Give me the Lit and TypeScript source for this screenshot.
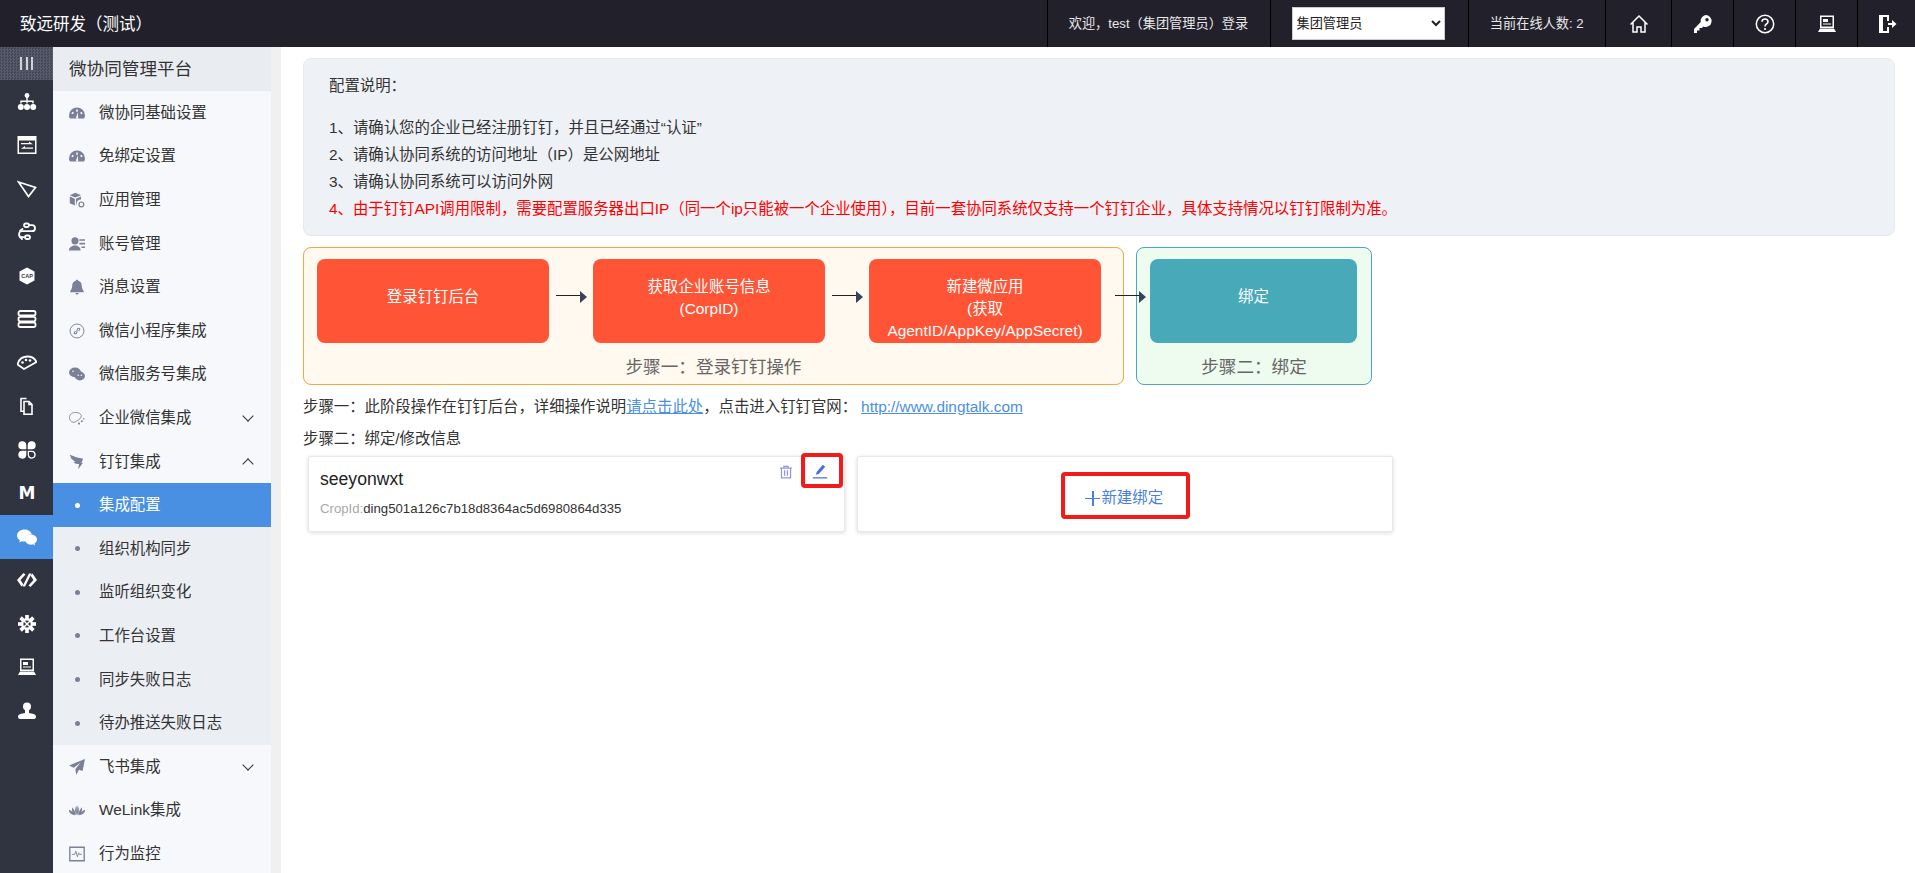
import { LitElement, html, css, svg } from 'lit';
import { customElement } from 'lit/decorators.js';
import { classMap } from 'lit/directives/class-map.js';

const teeth = [0, 45, 90, 135, 180, 225, 270, 315];

// all icons share a 20x20 box and inherit currentColor
const icons: Record<string, unknown> = {
  tree: svg`<circle cx="10" cy="3.500" r="2.400"/><path d="M9.300 5h1.400v3.600h6v3h-1.400v-1.600H10.700v1.600H9.300V10H4.700v1.600H3.300v-3h6z"/><circle cx="3.800" cy="15" r="3"/><circle cx="10" cy="15" r="3"/><circle cx="16.200" cy="15" r="3"/>`,
  panel: svg`<path fill-rule="evenodd" d="M.5 1h19v18H.5zM2 5.500v12h16v-12z"/><path d="M4 8h8V6.500l4 2.700H4zM16 12.500H8V11l-4 2.700h12z"/>`,
  send: svg`<path fill="none" stroke="currentColor" stroke-width="1.700" d="M1.500 3l17 5.500-7 9z"/>`,
  chain: svg`<g fill="none" stroke="currentColor" stroke-width="1.800" stroke-linecap="round"><rect x="7" y="1.500" width="5" height="3.500" rx="1.700"/><path d="M12 3.200h3a3 3 0 010 6H5a3 3 0 000 6h3"/><rect x="8" y="13.500" width="5" height="3.500" rx="1.700"/><path d="M3 8.800l2.500-1.800M3 15l2 2"/></g>`,
  cap: svg`<path d="M10 1.500l7.500 4v9l-7.500 4-7.500-4v-9z"/><text x="10" y="12" text-anchor="middle" class="tiny">CAP</text>`,
  stack: svg`<g fill="none" stroke="currentColor" stroke-width="1.800"><rect x="1.500" y="2" width="17" height="4.500" rx="1.800"/><rect x="1.500" y="7.800" width="17" height="4.500" rx="1.800"/><rect x="1.500" y="13.500" width="17" height="4.500" rx="1.800"/></g>`,
  fan: svg`<path fill="none" stroke="currentColor" stroke-width="1.800" stroke-linejoin="round" d="M.5 11.500C2 6 6 3.500 10.500 3.500c4 0 7.500 2.300 9 5.500L7 16z"/><circle cx="5.500" cy="9.500" r="1.300"/><circle cx="9" cy="7" r="1.300"/><circle cx="13" cy="7.500" r="1.300"/>`,
  docs: svg`<g fill="none" stroke="currentColor" stroke-width="1.600"><path d="M4 2.500v12.700h3"/><path d="M3.500 2.500h6M7 5.500h5l3 3v9.700H7z"/><path d="M12 5.500v3h3"/></g>`,
  clover: svg`<path d="M9.300 9.300H5a4 4 0 114.300-4.300zM10.700 9.300H15A4 4 0 1010.700 5zM9.300 10.700H5a4 4 0 104.300 4.300z"/><path fill-rule="evenodd" d="M10.700 10.700H15a4 4 0 11-4.300 4.300zM12 12v3a2.700 2.700 0 103-3z"/>`,
  em: svg`<text x="10" y="16" text-anchor="middle" class="big">M</text>`,
  wechat: svg`<path d="M7.500 2.500C3.400 2.500 0 5.200 0 8.600c0 2 1.100 3.600 2.900 4.800l-.7 2.100 2.500-1.300c.9.200 1.700.4 2.800.4h.7a5.500 5.500 0 01-.2-1.500c0-3.200 2.700-5.700 6.200-5.700h.6C14 4.600 11 2.500 7.500 2.500z"/><path d="M20 12.600c0-2.800-2.800-5.100-6-5.100-3.400 0-6 2.300-6 5.100s2.600 5.100 6 5.100c.7 0 1.400-.2 2.100-.4l1.900 1.100-.5-1.800c1.400-1 2.500-2.400 2.500-4z"/>`,
  code: svg`<path d="M6.500 3L0 10l4.500 6.500 2-2L3.500 10l5-5.500zM13.500 17L20 10l-4.500-6.500-2 2 3 4.500-5 5.500z"/><path d="M12 3.500h2.500L8 16.500H5.500z"/>`,
  gear: svg`${teeth.map((a) => svg`<rect x="8.200" y="1" width="3.600" height="5" transform="rotate(${a} 10 10)"/>`)}<circle cx="10" cy="10" r="6"/><circle cx="10" cy="10" r="3.600" fill="#303441"/><path d="M5.500 6.500l1-1 8 8-1 1zM13.500 5.500l1 1-8 8-1-1z"/>`,
  monitor: svg`<path fill-rule="evenodd" d="M3 1.500h14v12.500H3zM4.500 3v9.500h11V3z"/><path d="M6 5h5v3H6zM6 9.500h8v1H6zM3 14.500h14l2 3.500H1z"/>`,
  user: svg`<circle cx="10" cy="5.500" r="4"/><path d="M8 9h4v3c3 .5 7 1 7 3.500 0 2-1 2.500-3 2.500H4c-2 0-3-.5-3-2.500C1 13 5 12.500 8 12z"/>`,
  gauge: svg`<path fill-rule="evenodd" d="M10 3a10 10 0 0110 10c0 1.800-.5 3-1.500 4h-17C.5 16 0 14.800 0 13A10 10 0 0110 3zM9 5.500v3h2v-3zM4 8.500L3 10.500l2 1 1-2zM16 8.500l-2 1 1 2 2-1zM8.500 16.500h3L11 9z"/>`,
  box: svg`<path d="M8 1l7 3-7 3-7-3zM1 5.500l6.300 2.800V17L1 14zM15 5.500v4a5 5 0 00-5.500 5.500L8.700 17V8.300z"/><circle cx="15.500" cy="15.500" r="3" fill="none" stroke="currentColor" stroke-width="1.500"/>`,
  account: svg`<circle cx="7.500" cy="6" r="4.500"/><path d="M0 18c0-4 4-5 5.500-6h4c1.500 1 5 2 5 6zM13 4h7v2h-7zM13 8.500h7v2h-7zM15.500 13H20v2h-4.500z"/>`,
  bell: svg`<path d="M10 1c.8 0 1.500.5 1.500 1.300 3 .8 4.500 3.200 4.500 6.200 0 3 1 5 2.500 6.500v1.500h-17V15C3 13.500 4 11.500 4 8.500c0-3 1.500-5.400 4.500-6.200C8.500 1.500 9.200 1 10 1zM8 17.500h4a2 2 0 01-4 0z"/>`,
  mini: svg`<circle cx="10" cy="10" r="8.700" fill="none" stroke="currentColor" stroke-width="1.200"/><path fill="none" stroke="currentColor" stroke-width="1.300" d="M6.500 12.500c0 1.500 2.800 1.500 3.200-.5l.6-4c.4-2 3.200-2 3.200-.3 0 1.200-1 1.600-1.800 1.600M8.500 10.500c-1 0-2 .5-2 2"/>`,
  wx: svg`<ellipse cx="7.500" cy="8" rx="7.500" ry="6"/><ellipse cx="13.500" cy="12.500" rx="6.500" ry="5.500"/><circle cx="11.500" cy="11.500" r="1" fill="#f6f8fb"/><circle cx="15.500" cy="11.500" r="1" fill="#f6f8fb"/><circle cx="5" cy="6.500" r="1" fill="#f6f8fb"/>`,
  bubbles: svg`<path fill="none" stroke="currentColor" stroke-width="1.100" d="M3 14.500C1 13 .5 11 .5 9.500.5 5.500 4 3 8.500 3c3.500 0 6 1.500 7 4-.5 3-3 6-6.500 7-1 .5-1.500 1.500-3 1.500z"/><circle cx="16" cy="14" r="1.300"/><circle cx="12.500" cy="17" r="1.300"/><circle cx="18.500" cy="11" r="1"/>`,
  ding: svg`<path d="M1 1c5.500 2.500 11 4 16.500 4.500-.5 2.500-1 4-2.500 5.500h2.500L11.500 19l1-6.500H10c-1-.5-1.500 0-2-.5L5.500 10H8L3 6z"/>`,
  plane: svg`<path d="M20 0L0 8l6 3 8.500-6.500-6.500 8 1 7.500 3.500-6.500 4.500 1.500z"/>`,
  petals: svg`<g transform="translate(10 16.500)"><path d="M-.5 0C-3-3-3-8-.8-12-.2-8 .2-3-.5 0zM.5 0C3-3 3-8 .8-12 .2-8-.2-3 .5 0z"/><path d="M-1.500 0C-5-1-7-5-6-10-3.500-7-1.500-3-1.500 0z"/><path d="M1.500 0C5-1 7-5 6-10 3.500-7 1.500-3 1.500 0z"/><path d="M-2.500 0C-7-.5-10-3-10.500-7-6.500-6-3.500-3-2.500 0z"/><path d="M2.500 0C7-.5 10-3 10.500-7 6.500-6 3.500-3 2.500 0z"/></g>`,
  pulse: svg`<path fill="none" stroke="currentColor" stroke-width="1.700" d="M1 1.500h18v17H1z"/><path fill="none" stroke="currentColor" stroke-width="1.100" d="M3.500 10.500h3.500l1.500-4 2 7 1.500-5 1 2h3"/>`,
  home: svg`<path fill="none" stroke="currentColor" stroke-width="1.500" d="M1.500 10.500L10 2l8.500 8.500M4 8.500V18h4v-5h4v5h4V8.500"/>`,
  key: svg`<path fill-rule="evenodd" d="M12.500 1a6 6 0 11-2.300 11.500L9 14H6.500v2.500H4V19H1v-4l6.800-7a6 6 0 014.700-7zm1.500 3a1.700 1.700 0 100 3.400A1.700 1.700 0 0014 4z"/>`,
  help: svg`<circle cx="10" cy="10" r="8.700" fill="none" stroke="currentColor" stroke-width="1.500"/><path fill="none" stroke="currentColor" stroke-width="1.600" d="M7 7.800C7 6 8.300 5 10 5s3 1 3 2.700c0 2.300-3 2.300-3 4.800"/><circle cx="10" cy="15" r="1.100"/>`,
  exit: svg`<path d="M2 1h10v6h-2V3H6v14h4v-4h2v6H2z"/><path d="M11 9h4V6l4.500 4-4.500 4v-3h-4z"/>`,
  trash: svg`<path fill="none" stroke="currentColor" stroke-width="1.700" d="M1.500 4.500h17M7 4.500V2h6v2.500M3.500 4.500V18.500h13V4.500M8 7.500v8M12 7.500v8"/>`,
  pen: svg`<path d="M13.500 1l3 2.500-8 9-3.500 1 .8-3.500zM1 16.500h18V18H1z"/>`,
};

const icon = (name: string) => html`<svg class="icon" viewBox="0 0 20 20" fill="currentColor">${icons[name]}</svg>`;

const railItems = ['tree', 'panel', 'send', 'chain', 'cap', 'stack', 'fan', 'docs', 'clover', 'em', 'wechat', 'code', 'gear', 'monitor', 'user'];

type MenuItem = { label: string; icon?: string; caret?: 'up' | 'down'; sub?: boolean; active?: boolean };

const menuItems: MenuItem[] = [
  { label: '微协同基础设置', icon: 'gauge' },
  { label: '免绑定设置', icon: 'gauge' },
  { label: '应用管理', icon: 'box' },
  { label: '账号管理', icon: 'account' },
  { label: '消息设置', icon: 'bell' },
  { label: '微信小程序集成', icon: 'mini' },
  { label: '微信服务号集成', icon: 'wx' },
  { label: '企业微信集成', icon: 'bubbles', caret: 'down' },
  { label: '钉钉集成', icon: 'ding', caret: 'up' },
  { label: '集成配置', sub: true, active: true },
  { label: '组织机构同步', sub: true },
  { label: '监听组织变化', sub: true },
  { label: '工作台设置', sub: true },
  { label: '同步失败日志', sub: true },
  { label: '待办推送失败日志', sub: true },
  { label: '飞书集成', icon: 'plane', caret: 'down' },
  { label: 'WeLink集成', icon: 'petals' },
  { label: '行为监控', icon: 'pulse' },
];

@customElement('app-root')
export class AppRoot extends LitElement {
  static styles = css`
    :host {
      display: block;
      height: 873px;
      overflow: hidden;
      background: #fff;
      color: #333;
      font: 15.4px/22px 'Liberation Sans', 'Noto Sans CJK SC', sans-serif;
    }
    .icon {
      display: block;
      width: 100%;
      height: 100%;
    }
    .tiny {
      fill: #303441;
      font: 700 5.500px 'Liberation Sans', sans-serif;
    }
    .big {
      font: 700 17px 'DejaVu Sans', sans-serif;
    }

    /* top bar */
    .top {
      display: flex;
      align-items: center;
      height: 47px;
      background: #22212b;
      color: #e8e8ea;
      font-size: 13.2px;
    }
    .brand {
      flex: 1;
      padding-left: 20px;
      color: #fff;
      font-size: 16.500px;
    }
    .cell {
      display: flex;
      align-items: center;
      justify-content: center;
      height: 47px;
      box-sizing: border-box;
      border-left: 1px solid #000;
    }
    .welcome { width: 223px; }
    .pick { width: 198px; padding-right: 2px; }
    .online { width: 137.5px; }
    .tool { width: 62px; color: #fff; }
    .tool.first { width: 66px; }
    .tool.last { width: 58px; }
    .tool span {
      width: 20px;
      height: 20px;
    }
    select {
      width: 153px;
      height: 33px;
      padding: 0;
      border: 1px solid #ccc;
      border-radius: 0;
      background: #fff;
      color: #222;
      font: 13.2px 'Liberation Sans', 'Noto Sans CJK SC', sans-serif;
    }

    .body {
      display: flex;
      height: 826px;
    }

    /* icon rail */
    .rail {
      flex: none;
      width: 53px;
      background: #303441;
      color: #fff;
    }
    .rail-toggle {
      display: flex;
      justify-content: center;
      gap: 3.5px;
      height: 33px;
      padding-top: 10px;
      box-sizing: border-box;
      background: repeating-conic-gradient(#585c6a 0 25%, #43475a 0 50%) 0 0 / 3px 3px;
    }
    .rail-toggle i {
      width: 2px;
      height: 13px;
      background: #d0d2d8;
    }
    .rail-item {
      display: flex;
      align-items: center;
      justify-content: center;
      height: 43.5px;
    }
    .rail-item.on { background: #4a90e2; }
    .rail-item span {
      width: 20px;
      height: 20px;
    }

    /* side menu */
    .menu {
      flex: none;
      width: 218px;
      background: #f6f8fb;
    }
    .menu-title {
      height: 44px;
      padding-left: 16px;
      background: #e9ecf1;
      font-size: 17.6px;
      line-height: 44px;
    }
    .row {
      display: flex;
      align-items: center;
      height: 43.6px;
      padding: 0 17px 0 16px;
    }
    .row.sub { background: #ebeef3; }
    .row.on {
      background: #4a90e2;
      color: #fff;
    }
    .row-icon {
      flex: none;
      width: 16px;
      height: 16px;
      margin-right: 14px;
      color: #7b8098;
    }
    .dot {
      flex: none;
      width: 5px;
      height: 5px;
      margin: 0 19px 0 6px;
      border-radius: 50%;
      background: #7b8098;
    }
    .row.on .dot { background: #fff; }
    .label { flex: 1; }
    .caret {
      width: 7px;
      height: 7px;
      margin-right: 2px;
      border: solid #333;
      border-width: 0 1.5px 1.5px 0;
    }
    .caret.down { transform: translateY(-2px) rotate(45deg); }
    .caret.up { transform: translateY(2px) rotate(-135deg); }
    .gutter {
      flex: none;
      width: 10px;
      background: #f0f0f0;
    }

    /* main */
    .main {
      flex: 1;
      min-width: 0;
      padding: 11px 20px 0 22px;
    }
    .notice {
      height: 178px;
      box-sizing: border-box;
      padding: 13px 25px 0;
      border: 1px solid #e6e9ee;
      border-radius: 8px;
      background: #eef1f5;
      line-height: 27px;
    }
    .notice-title { margin-bottom: 15px; }
    .alert { color: #f00; }

    .flow {
      position: relative;
      display: flex;
      gap: 12px;
      height: 138px;
      margin-top: 11px;
    }
    .phase {
      box-sizing: border-box;
      height: 138px;
      padding: 11px 0 0;
      border: 1px solid;
      border-radius: 8px;
      text-align: center;
    }
    .phase.one {
      width: 821px;
      padding-left: 13px;
      border-color: #f5a93b;
      background: #fff9ef;
    }
    .phase.two {
      width: 236px;
      padding-left: 13px;
      border-color: #4ba6bf;
      background: #eefcf0;
    }
    .boxes {
      display: flex;
    }
    .block {
      flex: none;
      width: 232px;
      height: 84px;
      box-sizing: border-box;
      padding-top: 17px;
      border-radius: 8px;
      background: #ff5436;
      color: #fff;
    }
    .block.single { padding-top: 27px; }
    .block.teal {
      width: 207px;
      background: #48aab8;
    }
    .arrow {
      flex: none;
      width: 31px;
      height: 14px;
      margin: 31px 6px 0 7px;
      color: #3a4256;
    }
    .arrow.over {
      position: absolute;
      left: 812px;
      top: 43px;
      margin: 0;
    }
    .arrow svg { display: block; }
    .caption {
      margin: 13px 0 0 -13px;
      color: #666;
      font-size: 17.6px;
      line-height: 22px;
    }

    .note { margin-top: 11px; }
    .note + .note { margin-top: 10px; }
    .note a {
      color: #4a90e2;
      text-decoration: underline;
    }
    .note a.site { margin-left: 4px; }

    .cards {
      display: flex;
      gap: 12px;
      margin: 6px 0 0 5px;
    }
    .card {
      position: relative;
      box-sizing: border-box;
      width: 536.500px;
      height: 76px;
      border: 1px solid #e8e8e8;
      border-radius: 2px;
      background: #fff;
      box-shadow: 0 1px 4px rgba(0, 0, 0, 0.14);
    }
    .card-name {
      padding: 11px 0 0 11px;
      color: #222;
      font-size: 17.6px;
    }
    .card-id {
      padding: 9px 0 0 11px;
      font-size: 13.2px;
      line-height: 20px;
    }
    .card-id b {
      color: #a8a8a8;
      font-weight: 400;
    }
    .action {
      position: absolute;
    }
    .action.trash {
      left: 470px;
      top: 8px;
      width: 14px;
      height: 14px;
      color: #8f93ee;
    }
    .action.pen {
      left: 503px;
      top: 7px;
      width: 16px;
      height: 16px;
      color: #4a6ee0;
    }
    .mark {
      position: absolute;
      box-sizing: border-box;
      border: 4px solid #f01c1c;
      border-radius: 4px;
    }
    .mark.edit {
      left: 492px;
      top: -4px;
      width: 42px;
      height: 35px;
    }
    .mark.create {
      left: 203px;
      top: 15px;
      width: 129px;
      height: 47px;
    }
    .add {
      display: flex;
      align-items: center;
      justify-content: center;
      height: 74px;
      padding: 8px 1px 0 0;
      box-sizing: border-box;
      color: #4a7fe0;
    }
    .plus {
      position: relative;
      width: 15px;
      height: 15px;
      margin-right: 1px;
    }
    .plus::before,
    .plus::after {
      content: '';
      position: absolute;
      background: currentColor;
    }
    .plus::before { left: 0; right: 0; top: 7px; height: 1.500px; }
    .plus::after { top: 0; bottom: 0; left: 7px; width: 1.500px; }
  `;

  private arrow(over = false) {
    return html`<div class=${classMap({ arrow: true, over })}>
      <svg width="31" height="14" viewBox="0 0 31 14">
        <path d="M0 5.500h24" stroke="#222" stroke-width="1"/>
        <path d="M24 1l7 6-7 6z" fill="currentColor"/>
      </svg>
    </div>`;
  }

  protected render() {
    return html`
      <header class="top">
        <div class="brand">致远研发（测试）</div>
        <div class="cell welcome">欢迎，test（集团管理员）登录</div>
        <div class="cell pick">
          <select><option>集团管理员</option></select>
        </div>
        <div class="cell online">当前在线人数: 2</div>
        <div class="cell tool first"><span>${icon('home')}</span></div>
        <div class="cell tool"><span>${icon('key')}</span></div>
        <div class="cell tool"><span>${icon('help')}</span></div>
        <div class="cell tool"><span>${icon('monitor')}</span></div>
        <div class="cell tool last"><span>${icon('exit')}</span></div>
      </header>
      <div class="body">
        <nav class="rail">
          <div class="rail-toggle"><i></i><i></i><i></i></div>
          ${railItems.map(
            (name) => html`<div class=${classMap({ 'rail-item': true, on: name === 'wechat' })}>
              <span>${icon(name)}</span>
            </div>`,
          )}
        </nav>
        <aside class="menu">
          <div class="menu-title">微协同管理平台</div>
          ${menuItems.map(
            (item) => html`<div class=${classMap({ row: true, sub: !!item.sub, on: !!item.active })}>
              ${item.icon ? html`<span class="row-icon">${icon(item.icon)}</span>` : html`<span class="dot"></span>`}
              <span class="label">${item.label}</span>
              ${item.caret ? html`<span class="caret ${item.caret}"></span>` : ''}
            </div>`,
          )}
        </aside>
        <div class="gutter"></div>
        <main class="main">
          <section class="notice">
            <div class="notice-title">配置说明：</div>
            <div>1、请确认您的企业已经注册钉钉，并且已经通过“认证”</div>
            <div>2、请确认协同系统的访问地址（IP）是公网地址</div>
            <div>3、请确认协同系统可以访问外网</div>
            <div class="alert">4、由于钉钉API调用限制，需要配置服务器出口IP（同一个ip只能被一个企业使用），目前一套协同系统仅支持一个钉钉企业，具体支持情况以钉钉限制为准。</div>
          </section>
          <section class="flow">
            <div class="phase one">
              <div class="boxes">
                <div class="block single">登录钉钉后台</div>
                ${this.arrow()}
                <div class="block">获取企业账号信息<br />(CorpID)</div>
                ${this.arrow()}
                <div class="block">新建微应用<br />(获取<br />AgentID/AppKey/AppSecret)</div>
              </div>
              <div class="caption">步骤一：登录钉钉操作</div>
            </div>
            ${this.arrow(true)}
            <div class="phase two">
              <div class="boxes"><div class="block single teal">绑定</div></div>
              <div class="caption">步骤二：绑定</div>
            </div>
          </section>
          <div class="note">步骤一：此阶段操作在钉钉后台，详细操作说明<a>请点击此处</a>，点击进入钉钉官网：<a class="site">http://www.dingtalk.com</a></div>
          <div class="note">步骤二：绑定/修改信息</div>
          <section class="cards">
            <div class="card">
              <div class="card-name">seeyonwxt</div>
              <div class="card-id"><b>CropId:</b>ding501a126c7b18d8364ac5d6980864d335</div>
              <span class="action trash">${icon('trash')}</span>
              <span class="action pen">${icon('pen')}</span>
              <div class="mark edit"></div>
            </div>
            <div class="card">
              <div class="add"><span class="plus"></span>新建绑定</div>
              <div class="mark create"></div>
            </div>
          </section>
        </main>
      </div>
    `;
  }
}

declare global {
  interface HTMLElementTagNameMap {
    'app-root': AppRoot;
  }
}
